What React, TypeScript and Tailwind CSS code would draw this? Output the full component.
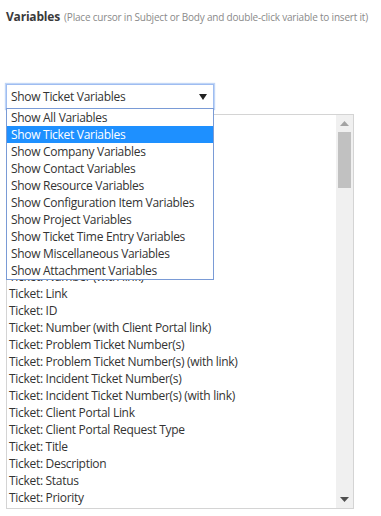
import React from "react";

const options = [
  "Show All Variables",
  "Show Ticket Variables",
  "Show Company Variables",
  "Show Contact Variables",
  "Show Resource Variables",
  "Show Configuration Item Variables",
  "Show Project Variables",
  "Show Ticket Time Entry Variables",
  "Show Miscellaneous Variables",
  "Show Attachment Variables",
];

const items = [
  "",
  "",
  "",
  "",
  "",
  "",
  "",
  "",
  "",
  "Ticket: Number (with link)",
  "Ticket: Link",
  "Ticket: ID",
  "Ticket: Number (with Client Portal link)",
  "Ticket: Problem Ticket Number(s)",
  "Ticket: Problem Ticket Number(s) (with link)",
  "Ticket: Incident Ticket Number(s)",
  "Ticket: Incident Ticket Number(s) (with link)",
  "Ticket: Client Portal Link",
  "Ticket: Client Portal Request Type",
  "Ticket: Title",
  "Ticket: Description",
  "Ticket: Status",
  "Ticket: Priority",
];

export default function App() {
  return (
    <div
      className="w-[381px] h-[516px] bg-white overflow-hidden pl-[6px] text-[#333333]"
      style={{ fontFamily: '"Open Sans", "Noto Sans", sans-serif' }}
    >
      <div className="pt-[6px] h-[84px] whitespace-nowrap leading-[18px]">
        <span className="text-[12px] font-bold text-[#3a3a3a] tracking-[-0.2px]">Variables</span>{" "}
        <span className="text-[10px] text-[#8a8a8a] tracking-[-0.2px]">
          (Place cursor in Subject or Body and double-click variable to insert it)
        </span>
      </div>

      <div className="relative w-[348px]">
        <div className="w-[208px] h-[25px] border border-[#9fbdf1] shadow-[0_0_1px_1px_rgba(150,185,240,0.6)] bg-white flex items-center pl-[4px] pr-[6px] text-[12px] tracking-[-0.3px] text-[#333]">
          <span className="flex-1">Show Ticket Variables</span>
          <svg width="8" height="6" viewBox="0 0 8 6">
            <path d="M0 0 H8 L4 6 Z" fill="#222" />
          </svg>
        </div>

        <div className="mt-[5px] h-[395px] border border-[#d4d4d4] flex">
          <div className="flex-1 overflow-hidden pl-[2px]">
            {items.map((t, i) => (
              <div key={i} className="h-[17px] leading-[17px] text-[12px] tracking-[-0.3px] text-[#333] whitespace-nowrap">
                {t}
              </div>
            ))}
          </div>
          <div className="w-[17px] bg-[#f0f0f0] flex flex-col items-center">
            <div className="h-[17px] flex items-center justify-center">
              <svg width="9" height="5" viewBox="0 0 9 5">
                <path d="M0 5 L4.5 0 L9 5 Z" fill="#a3a3a3" />
              </svg>
            </div>
            <div className="w-[13px] h-[56px] bg-[#c1c1c1]" />
            <div className="flex-1" />
            <div className="h-[17px] flex items-center justify-center">
              <svg width="9" height="5" viewBox="0 0 9 5">
                <path d="M0 0 L9 0 L4.5 5 Z" fill="#505050" />
              </svg>
            </div>
          </div>
        </div>

        <div className="absolute left-0 top-[24px] w-[208px] border border-[#7a9bd6] bg-white">
          {options.map((o, i) => (
            <div
              key={o}
              className={
                i === 1
                  ? "h-[17px] leading-[17px] pl-[4px] text-[12px] tracking-[-0.3px] bg-[#1e90ff] text-white whitespace-nowrap"
                  : "h-[17px] leading-[17px] pl-[4px] text-[12px] tracking-[-0.3px] text-[#333] whitespace-nowrap"
              }
            >
              {o}
            </div>
          ))}
        </div>
      </div>
    </div>
  );
}
